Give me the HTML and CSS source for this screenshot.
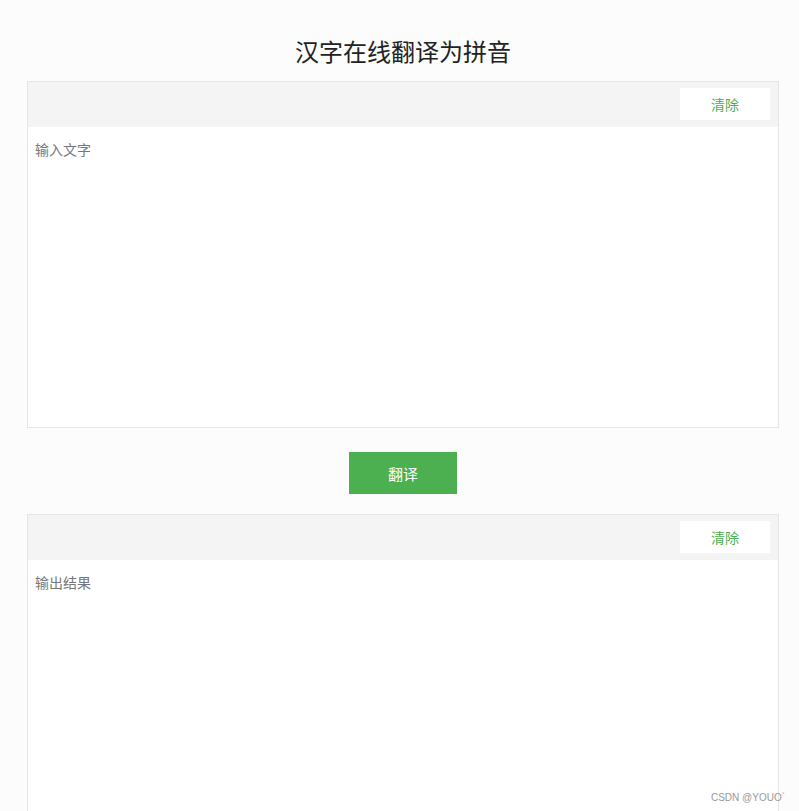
FILE: index.html
```html
<!DOCTYPE html>
<html lang="zh-CN">
<head>
<meta charset="UTF-8">
<title>汉字在线翻译为拼音</title>
<link rel="stylesheet" href="styles.css">
</head>
<body>

<div class="page">
  <h1 class="title">汉字在线翻译为拼音</h1>

  <!-- INPUT -->
  <div class="panel">
    <div class="panel-bar">
      <button class="btn-clear">清除</button>
    </div>
    <textarea class="panel-text" placeholder="输入文字"></textarea>
  </div>

  <div class="actions">
    <button class="btn-go">翻译</button>
  </div>

  <!-- OUTPUT -->
  <div class="panel">
    <div class="panel-bar">
      <button class="btn-clear">清除</button>
    </div>
    <textarea class="panel-text" placeholder="输出结果"></textarea>
  </div>
</div>

<div class="watermark">CSDN @YOUO`</div>

</body>
</html>
```

FILE: styles.css
```css
* { box-sizing: border-box; font-family: "Microsoft YaHei", "Noto Sans CJK SC", "Liberation Sans", sans-serif; }
html, body { margin: 0; height: 100%; overflow: hidden; }
body { background: #fcfcfc; }

.page {
  width: 752px;
  margin: 0 0 0 27px;
  padding-top: 36px;
}

.title {
  margin: 0 0 15px;
  font-size: 24px;
  line-height: 30px;
  font-weight: normal;
  color: #222;
  text-align: center;
}

/* PANEL */
.panel {
  border: 1px solid #e6e6e6;
  background: #fff;
}

.panel-bar {
  display: flex;
  justify-content: flex-end;
  align-items: flex-start;
  height: 45px;
  padding: 6px 8px 0;
  background: #f4f4f4;
}

.btn-clear {
  width: 90px;
  height: 32px;
  border: none;
  background: #fff;
  color: #4caf50;
  font-size: 14px;
  cursor: pointer;
}

.panel-text {
  display: block;
  width: 100%;
  height: 300px;
  border: none;
  outline: none;
  resize: none;
  padding: 12px 7px;
  font-size: 14px;
  line-height: 20px;
  color: #333;
  background: #fff;
}
.panel-text::placeholder { color: #777; }

.actions {
  display: flex;
  justify-content: center;
  padding: 24px 0 20px;
}

.btn-go {
  width: 108px;
  height: 42px;
  border: none;
  background: #4caf50;
  color: #fff;
  font-size: 15px;
  cursor: pointer;
}

.watermark {
  position: absolute;
  right: 14px;
  bottom: 8px;
  font-family: "Liberation Sans", sans-serif;
  font-size: 10px;
  color: #999;
}
```
